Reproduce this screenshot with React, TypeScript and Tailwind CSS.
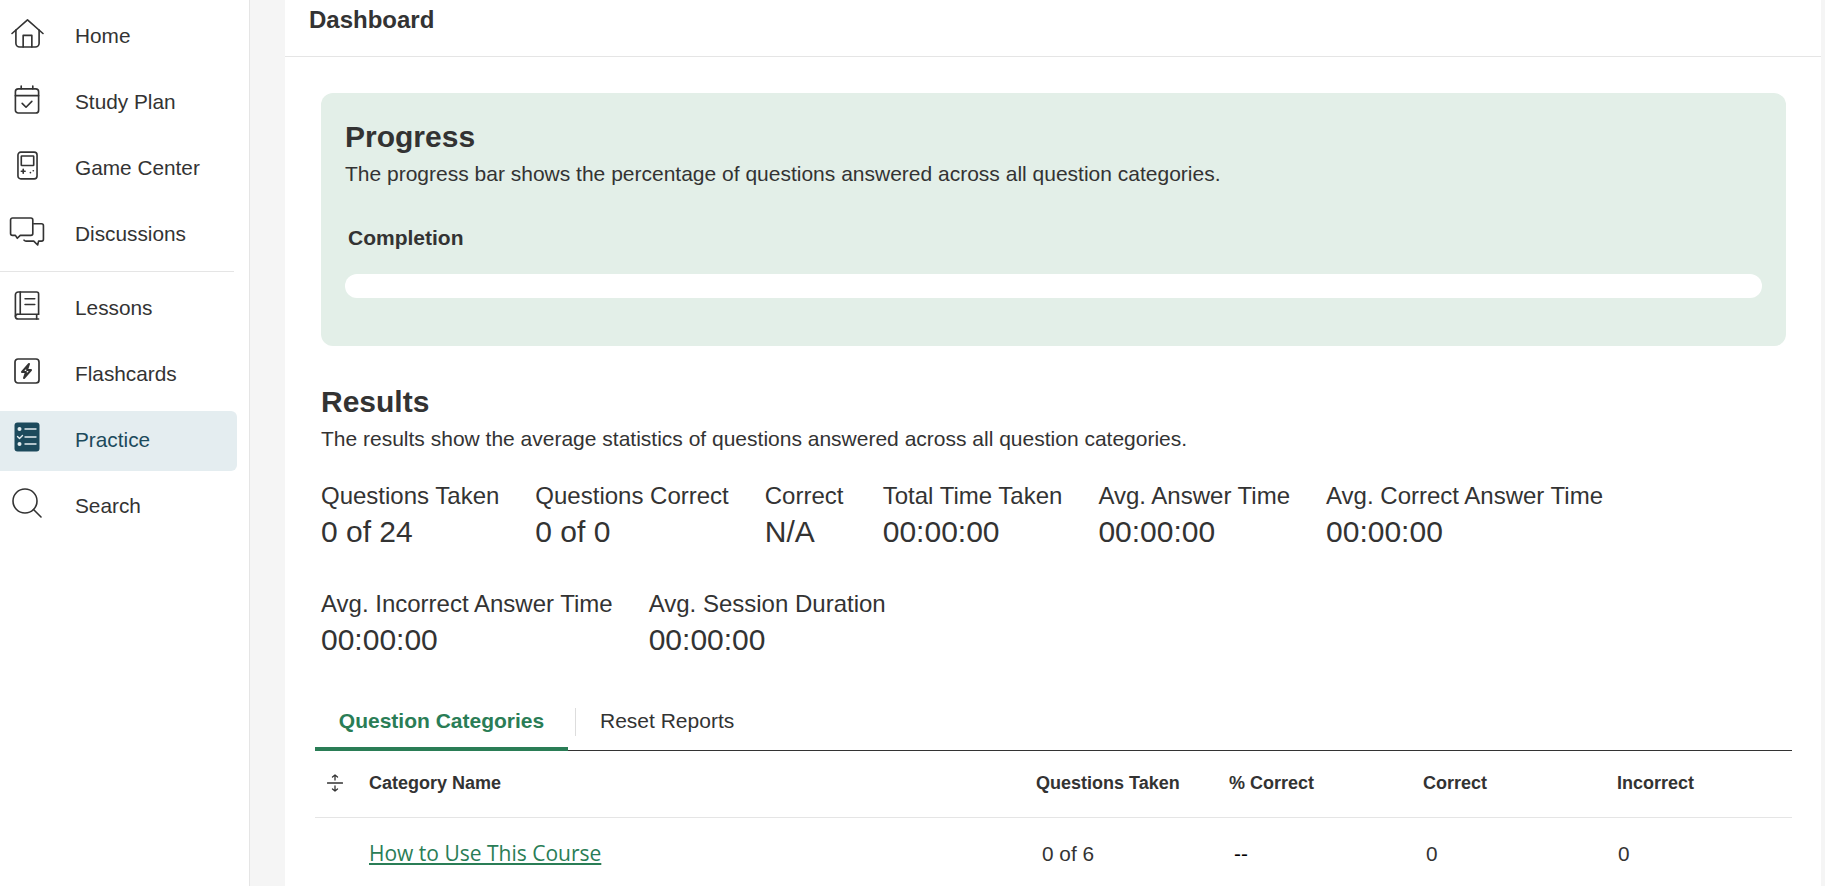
import type { ReactNode } from 'react';

function HomeIcon() {
	return (
		<svg width="33" height="29" viewBox="0 0 34 30" fill="none" stroke="currentColor" strokeWidth="1.7" strokeLinejoin="round" strokeLinecap="round">
			<path d="M1 15 17 1l16 14" />
			<path d="M5 11.5V25a4 4 0 0 0 4 4h16a4 4 0 0 0 4-4V11.5" />
			<path d="M12.5 29V17h9v12" />
		</svg>
	);
}

function CalendarIcon() {
	return (
		<svg width="26" height="29" viewBox="0 0 26 30" fill="none" stroke="currentColor" strokeWidth="1.7" strokeLinecap="round" strokeLinejoin="round">
			<rect x="1" y="4" width="24" height="25" rx="3" />
			<path d="M1 11h24M7 1v3M19 1v3M8 19l4 4 6-6" />
		</svg>
	);
}

function GameIcon() {
	return (
		<svg width="21" height="29" viewBox="0 0 22 30" fill="none" stroke="currentColor" strokeWidth="1.7" strokeLinecap="round" strokeLinejoin="round">
			<rect x="1" y="1" width="20" height="28" rx="3" />
			<rect x="4.5" y="5" width="13" height="10" rx="0.5" />
			<path d="M4.5 21h4M6.5 19v4M14 22.5h.1M17 20.5h.1" />
		</svg>
	);
}

function ChatIcon() {
	return (
		<svg width="36" height="29" viewBox="0 0 36 30" fill="none" stroke="currentColor" strokeWidth="1.7" strokeLinecap="round" strokeLinejoin="round">
			<path d="M3 1h19a2 2 0 0 1 2 2v14a2 2 0 0 1-2 2H11l-3 3-2-3H3a2 2 0 0 1-2-2V3a2 2 0 0 1 2-2Z" />
			<path d="M25 7h8a2 2 0 0 1 2 2v14a2 2 0 0 1-2 2h-3l-1 4-4-4H17a3 3 0 0 1-2-1" />
		</svg>
	);
}

function BookIcon() {
	return (
		<svg width="26" height="29" viewBox="0 0 26 30" fill="none" stroke="currentColor" strokeWidth="1.7" strokeLinecap="round" strokeLinejoin="round">
			<path d="M25 24V3a2 2 0 0 0-2-2H4a3 3 0 0 0-3 3v22a3 3 0 0 0 3 3h21" />
			<path d="M1 26a3 3 0 0 1 3-2h21M6 1v23M11 8h10M11 14h10M23 24v5" />
		</svg>
	);
}

function FlashIcon() {
	return (
		<svg width="26" height="26" viewBox="0 0 26 26" fill="none" stroke="currentColor" strokeLinejoin="round">
			<rect x="1" y="1" width="24" height="24" rx="3" strokeWidth="1.7" />
			<path d="M15 6 8 14h4l-2 6 7-8h-4l2-6Z" strokeWidth="2" />
		</svg>
	);
}

function PracticeIcon() {
	return (
		<svg width="26" height="30" viewBox="0 0 26 30" fill="none">
			<rect x="0.5" y="0.5" width="25" height="29" rx="3" fill="#1c4a5c" />
			<circle cx="5.5" cy="7" r="2" fill="#e4edf0" />
			<circle cx="5.5" cy="22" r="2" fill="#e4edf0" />
			<path d="M11 7h11M11 15h11M11 22h11M3.5 14.5l2 2 3-3" stroke="#e4edf0" strokeWidth="1.4" strokeLinecap="round" strokeLinejoin="round" />
		</svg>
	);
}

function SearchIcon() {
	return (
		<svg width="30" height="30" viewBox="0 0 30 30" fill="none" stroke="currentColor" strokeWidth="1.6" strokeLinecap="round">
			<circle cx="13" cy="13" r="12" />
			<path d="m21.5 21.5 7.5 7.5" />
		</svg>
	);
}

function NavItem( { icon, label, active }: { icon: ReactNode; label: string; active?: boolean } ) {
	return (
		<div className={ `flex items-center h-[60px] rounded-r-md w-[237px] ${ active ? 'mt-px -mb-px pb-[2px] bg-[#e4edf0] text-[#1c4a5c]' : 'text-[#333333]' }` }>
			<div className="w-[54px] -mt-[6px] flex justify-center shrink-0">{ icon }</div>
			<span className="ml-[21px] text-[20.8px]">{ label }</span>
		</div>
	);
}

function Stat( { label, value, className = '' }: { label: string; value: string; className?: string } ) {
	return (
		<div className={ `flex flex-col ${ className }` }>
			<span className="text-[24px] leading-[36px]">{ label }</span>
			<span className="text-[30px] leading-[36px]">{ value }</span>
		</div>
	);
}

const gridCols = 'grid grid-cols-[54px_667px_193px_194px_194px_1fr] items-center';

export default function App() {
	return (
		<div className="flex h-screen overflow-hidden bg-[#f5f5f5] text-[#333333] font-['Liberation_Sans',Arial,sans-serif]">
			<aside className="w-[250px] shrink-0 bg-white border-r border-[#e5e5e5] pt-[6px]">
				<div className="flex flex-col gap-[6px]">
					<NavItem icon={ <HomeIcon /> } label="Home" />
					<NavItem icon={ <CalendarIcon /> } label="Study Plan" />
					<NavItem icon={ <GameIcon /> } label="Game Center" />
					<NavItem icon={ <ChatIcon /> } label="Discussions" />
				</div>
				<div className="w-[234px] h-px bg-[#e5e5e5] mt-[7px] mb-[6px]" />
				<div className="flex flex-col gap-[6px]">
					<NavItem icon={ <BookIcon /> } label="Lessons" />
					<NavItem icon={ <FlashIcon /> } label="Flashcards" />
					<NavItem icon={ <PracticeIcon /> } label="Practice" active />
					<NavItem icon={ <SearchIcon /> } label="Search" />
				</div>
			</aside>
			<main className="ml-[35px] mr-[4px] flex-1 min-w-0 bg-white">
				<header className="h-[57px] border-b border-[#e5e5e5] pl-[24px] pt-[5px]">
					<h1 className="text-[24px] leading-[30px] font-bold">Dashboard</h1>
				</header>
				<div className="pl-[36px] pr-[35px] pt-[36px]">
					<section className="h-[253px] rounded-xl bg-[#e3efe8] px-6 pt-[26px]">
						<h2 className="text-[30px] leading-[36px] font-bold">Progress</h2>
						<p className="mt-[4px] text-[21px] leading-[30px]">The progress bar shows the percentage of questions answered across all question categories.</p>
						<div className="mt-[34px] ml-[3px] text-[21px] leading-[30px] font-bold">Completion</div>
						<div className="mt-[21px] h-6 rounded-full bg-white" />
					</section>
					<section className="mt-[38px]">
						<h2 className="text-[30px] leading-[36px] font-bold">Results</h2>
						<p className="mt-[4px] text-[21px] leading-[30px]">The results show the average statistics of questions answered across all question categories.</p>
						<div className="mt-[24px] flex flex-wrap gap-x-9 gap-y-[36px]">
							<Stat label="Questions Taken" value="0 of 24" />
							<Stat label="Questions Correct" value="0 of 0" />
							<Stat label="Correct" value="N/A" className="w-[82px]" />
							<Stat label="Total Time Taken" value="00:00:00" />
							<Stat label="Avg. Answer Time" value="00:00:00" />
							<Stat label="Avg. Correct Answer Time" value="00:00:00" />
							<Stat label="Avg. Incorrect Answer Time" value="00:00:00" />
							<Stat label="Avg. Session Duration" value="00:00:00" />
						</div>
					</section>
					<section className="mt-[36px] -mx-[6px]">
						<div className="flex items-center h-[57px] border-b border-[#333333] relative">
							<div className="w-[253px] h-full flex items-center justify-center text-[21px] font-bold text-[#2a7d56] border-b-[4px] border-[#2a7d56] -mb-px">Question Categories</div>
							<div className="w-px h-[28px] bg-[#dddddd] ml-[7px] -mt-px" />
							<div className="ml-[24px] -mt-[2px] text-[21px]">Reset Reports</div>
						</div>
						<div className={ `${ gridCols } h-[67px] pb-[2px] border-b border-[#e5e5e5] text-[18px] font-bold` }>
							<div className="pl-[12px]">
								<svg width="16" height="18" viewBox="0 0 16 18" fill="none" stroke="#333333" strokeWidth="1.3" strokeLinecap="round" strokeLinejoin="round">
									<path d="M0.5 9h15M8 1v5M5.5 3 8 1l2.5 2M8 12v5M5.5 15 8 17l2.5-2" />
								</svg>
							</div>
							<div>Category Name</div>
							<div>Questions Taken</div>
							<div>% Correct</div>
							<div>Correct</div>
							<div>Incorrect</div>
						</div>
						<div className={ `${ gridCols } h-[71px] text-[20.8px]` }>
							<div />
							<a href="#" className="font-['Open_Sans',sans-serif] text-[21px] text-[#2a7d56] underline">How to Use This Course</a>
							<div className="pl-[6px]">0 of 6</div>
							<div className="pl-[5px] text-black">--</div>
							<div className="pl-[3px]">0</div>
							<div className="pl-[1px]">0</div>
						</div>
					</section>
				</div>
			</main>
		</div>
	);
}
